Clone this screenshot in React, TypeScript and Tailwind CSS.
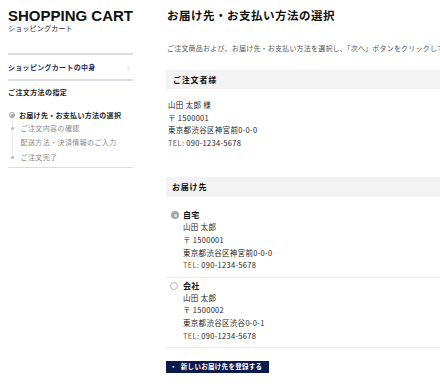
import React from "react";

const jp = { fontFamily: '"Noto Sans CJK JP", "Noto Sans", sans-serif' };

function Addr({ lines, tel }: { lines: string[]; tel: string }) {
  return (
    <div className="text-[7.5px] leading-[12.6px] tracking-[0.3px] text-[#222] whitespace-nowrap">
      {lines.map((l, i) => (
        <div key={i}>{l}</div>
      ))}
      <div>
        <span className="text-[#7a5232]">TEL:</span> {tel}
      </div>
    </div>
  );
}

export default function App() {
  return (
    <div className="w-[440px] h-[390px] overflow-hidden bg-white flex" style={jp}>
      {/* Sidebar */}
      <div className="ml-[8px] w-[125px] shrink-0 flex flex-col">
        <div
          className="mt-[8px] text-[15px] leading-[15px] font-bold text-[#111] whitespace-nowrap"
          style={{ fontFamily: '"Liberation Sans", Arial, sans-serif' }}
        >
          SHOPPING CART
        </div>
        <div className="mt-[1px] text-[7px] leading-[9px] tracking-[0.2px] text-[#222] whitespace-nowrap">ショッピングカート</div>
        <div className="mt-[20px] h-[2px] bg-[#dcdde3]" />
        <div className="h-[24px] flex items-center justify-between">
          <span className="text-[7px] font-bold tracking-[0.3px] text-[#1c2a5c]">ショッピングカートの中身</span>
          <span className="text-[7px] text-[#aaa] mr-[4px]">›</span>
        </div>
        <div className="h-[2px] bg-[#dcdde3]" />
        <div className="mt-[6px] h-[10px] flex items-center text-[7px] font-bold tracking-[0.4px] text-[#222]">
          ご注文方法の指定
        </div>
        <div className="relative mt-[13px]">
          <div className="absolute left-[3.5px] top-[4px] w-px h-[42px] bg-[#ececec]" />
          <div className="flex items-center h-[10px]">
            <div className="w-[6px] h-[6px] rounded-full border border-[#9a9a9a] flex items-center justify-center ml-[1px] relative bg-white">
              <div className="w-[3px] h-[3px] rounded-full bg-[#9a9a9a]" />
            </div>
            <span className="ml-[4px] text-[7px] font-bold tracking-[0.3px] text-[#222] whitespace-nowrap">
              お届け先・お支払い方法の選択
            </span>
          </div>
          <div className="flex items-start mt-[1px]">
            <div className="w-[3px] h-[3px] rounded-full bg-[#bbb] ml-[2.5px] mt-[5.5px] relative" />
            <div className="ml-[7px] text-[7px] leading-[14px] tracking-[0.4px] text-[#888] whitespace-nowrap">
              <div>ご注文内容の確認</div>
              <div>配送方法・決済情報のご入力</div>
            </div>
          </div>
          <div className="flex items-center h-[12px] mt-[2px]">
            <div className="w-[3px] h-[3px] rounded-full bg-[#bbb] ml-[2.5px] relative" />
            <span className="ml-[7px] text-[7px] tracking-[0.4px] text-[#888]">ご注文完了</span>
          </div>
        </div>
        <div className="mt-[4px] h-px bg-[#dcdde3]" />
      </div>

      {/* Main */}
      <div className="ml-[33px] w-[320px] shrink-0 flex flex-col">
        <div className="h-[32px] flex items-center pl-[1px] text-[11.5px] font-bold tracking-[0.5px] text-[#111] whitespace-nowrap">
          お届け先・お支払い方法の選択
        </div>
        <div className="mt-[8px] h-[16px] flex items-center pl-[1px] text-[7px] tracking-[0.2px] text-[#555] whitespace-nowrap overflow-hidden">
          ご注文商品および、お届け先・お支払い方法を選択し、「次へ」ボタンをクリックしてください。
        </div>
        <div className="mt-[14px] h-[19px] bg-[#f3f3f3] flex items-center pl-[7px] text-[8px] font-bold tracking-[0.8px] text-[#111]">
          ご注文者様
        </div>
        <div className="mt-[10px] pl-[2px]">
          <Addr lines={["山田 太郎 様", "〒 1500001", "東京都渋谷区神宮前0-0-0"]} tel="090-1234-5678" />
        </div>
        <div className="mt-[28px] h-[20px] bg-[#f3f3f3] flex items-center pl-[6px] text-[8px] font-bold tracking-[0.8px] text-[#111]">
          お届け先
        </div>
        {/* 自宅 */}
        <div className="mt-[12px] pl-[5px] flex">
          <div className="w-[8px] h-[8px] mt-[2px] rounded-full bg-[#a5a5a5] flex items-center justify-center shrink-0">
            <div className="w-[3px] h-[3px] rounded-full bg-[#e2e2e2]" />
          </div>
          <div className="ml-[4px]">
            <div className="text-[8px] leading-[12px] font-bold tracking-[0.3px] text-[#111]">自宅</div>
            <Addr lines={["山田 太郎", "〒 1500001", "東京都渋谷区神宮前0-0-0"]} tel="090-1234-5678" />
          </div>
        </div>
        <div className="mt-[5px] h-px bg-[#ececec]" />
        {/* 会社 */}
        <div className="mt-[2px] pl-[4px] flex">
          <div className="w-[8px] h-[8px] mt-[2px] rounded-full border border-[#b5b5b5] bg-white shrink-0" />
          <div className="ml-[5px]">
            <div className="text-[8px] leading-[12px] font-bold tracking-[0.3px] text-[#111]">会社</div>
            <Addr lines={["山田 太郎", "〒 1500002", "東京都渋谷区渋谷0-0-1"]} tel="090-1234-5678" />
          </div>
        </div>
        <div className="mt-[5px] h-px bg-[#ececec]" />
        <div className="mt-[13px]">
          <div className="w-[103px] h-[12px] bg-[#0c1a4a] flex items-center pl-[4px] text-[6.5px] font-bold tracking-[0.3px] text-white whitespace-nowrap">
            <span className="mr-[4px]">・</span>新しいお届け先を登録する
          </div>
        </div>
      </div>
    </div>
  );
}
